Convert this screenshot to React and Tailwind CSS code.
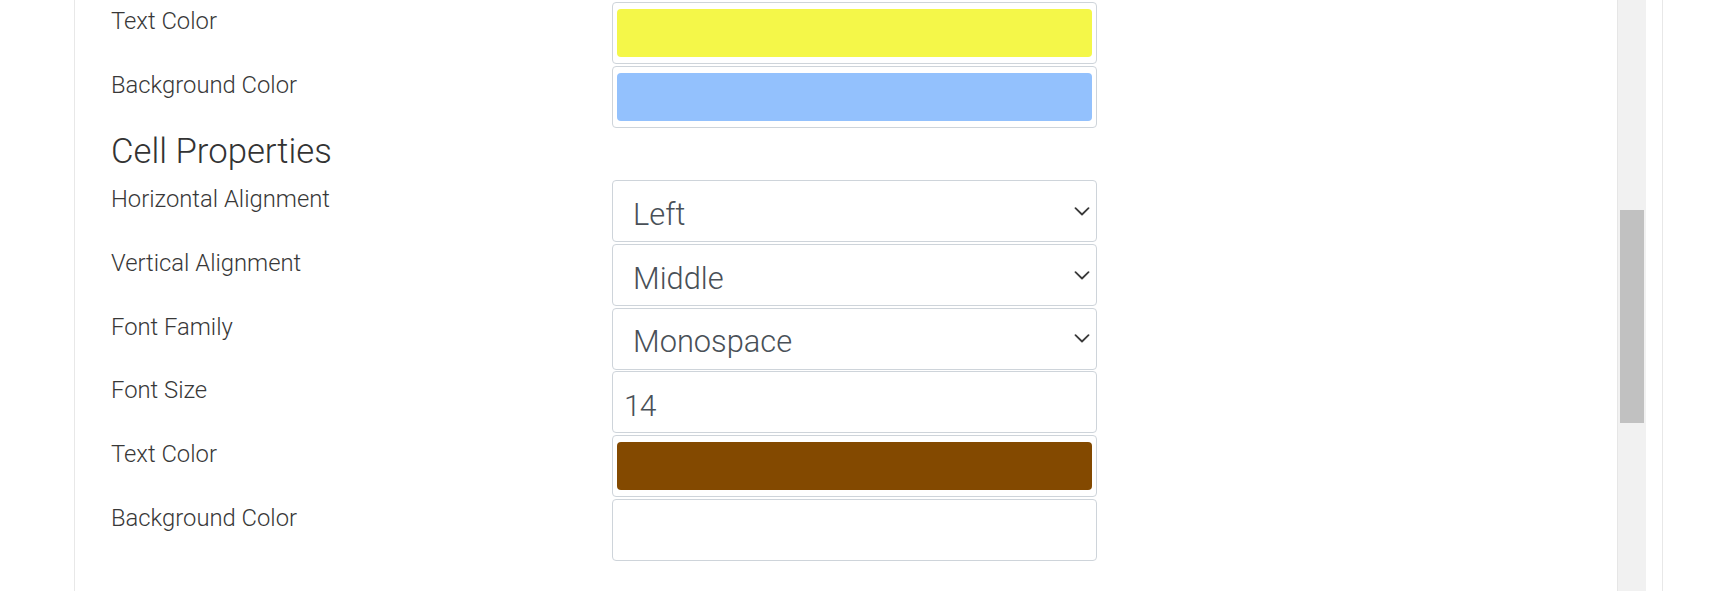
import React from "react";

const topRows = [
    { label: "Text Color", swatch: "#f4f749" },
    { label: "Background Color", swatch: "#93c1fd" },
];

function Chevron() {
    return (
        <svg width="16" height="9" viewBox="0 0 16 9" fill="none" className="shrink-0">
            <path d="M1.5 1.2l6.5 6.3 6.5-6.3" stroke="#3a3a3a" strokeWidth="1.8" strokeLinecap="round" strokeLinejoin="round" />
        </svg>
    );
}

function Row({ label, children }) {
    return (
        <div className="flex mb-[1.7px]">
            <div className="w-[501px] pt-[6px] text-[23.8px] leading-[27px] text-[#383838]">{label}</div>
            <div className="w-[485px] h-[62px] border border-[#ced4da] rounded-[4px] bg-white">
                {children}
            </div>
        </div>
    );
}

function Swatch({ color }) {
    return (
        <div className="h-full px-[4px] py-[6px]">
            <div className="h-full rounded-[4px]" style={{ backgroundColor: color }} />
        </div>
    );
}

function SelectBox({ value }) {
    return (
        <div className="h-full flex items-center justify-between pl-[20px] pr-[6px] pt-[6px]">
            <span className="text-[30.8px] leading-[35px] text-[#495057]">{value}</span>
            <span className="-mt-[6px]"><Chevron /></span>
        </div>
    );
}

export default function App() {
    return (
        <div className="h-[591px] w-full overflow-hidden bg-white font-light" style={{ fontFamily: "Roboto, 'Noto Sans', sans-serif" }}>
            <div className="ml-[74px] w-[1589px] h-full flex border-x border-[#e8e8e8]">
                <div className="flex-1 pl-[36px] pt-[2px]">
                    {topRows.map((r) => (
                        <Row key={r.label} label={r.label}>
                            <Swatch color={r.swatch} />
                        </Row>
                    ))}

                    <div className="h-[51px] pt-[2px] text-[34.7px] leading-[40px] text-[#333]">Cell Properties</div>

                    <Row label="Horizontal Alignment"><SelectBox value="Left" /></Row>
                    <Row label="Vertical Alignment"><SelectBox value="Middle" /></Row>
                    <Row label="Font Family"><SelectBox value="Monospace" /></Row>
                    <Row label="Font Size">
                        <div className="h-full flex items-center pl-[11px] pt-[6px]">
                            <span className="text-[30px] leading-[35px] text-[#495057] tracking-[-1px]">14</span>
                        </div>
                    </Row>
                    <Row label="Text Color"><Swatch color="#834900" /></Row>
                    <Row label="Background Color"><Swatch color="#ffffff" /></Row>
                </div>

                <div className="w-[29px] h-full bg-[#f1f1f1] border-l border-[#e6e6e6]">
                    <div className="mt-[210px] h-[213px] mx-[2px] bg-[#c1c1c1]" />
                </div>
                <div className="w-[16px]" />
            </div>
        </div>
    );
}
